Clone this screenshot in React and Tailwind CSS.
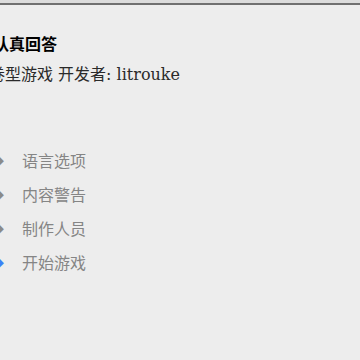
export default function App() {
  const items = ['语言选项', '内容警告', '制作人员', '开始游戏']
  const serif = { fontFamily: '"DejaVu Serif", "Noto Sans CJK SC", serif' }
  return (
    <div className="w-[360px] h-[360px] overflow-hidden bg-[#ededed] relative" style={serif}>
      <div className="h-[3px] bg-[#dcdcdc]" />
      <div className="h-[2px] bg-[#707070]" />
      <div className="ml-[-7px] mt-[28px] text-[16px] leading-[20px] font-bold text-black" style={{ fontFamily: '"Noto Sans CJK SC", sans-serif' }}>认真回答</div>
      <div className="ml-[-27px] mt-[12px] text-[16px] leading-[20px] text-[#2a2a2a] whitespace-nowrap">问卷型游戏 开发者: litrouke</div>
      <div className="mt-[65px] flex flex-col gap-[14px]">
        {items.map((t, i) => (
          <div key={t} className="flex items-center h-[20px] whitespace-nowrap">
            <span className={`ml-[-10px] w-[32px] text-[14px] ${i === 3 ? 'text-[#3b82f6]' : 'text-[#8a8a8a]'}`} style={{ fontFamily: '"Noto Sans CJK SC", sans-serif' }}>◆</span>
            <span className="text-[16px] text-[#858585]" style={{ fontFamily: '"Noto Sans CJK SC", sans-serif' }}>{t}</span>
          </div>
        ))}
      </div>
    </div>
  )
}
